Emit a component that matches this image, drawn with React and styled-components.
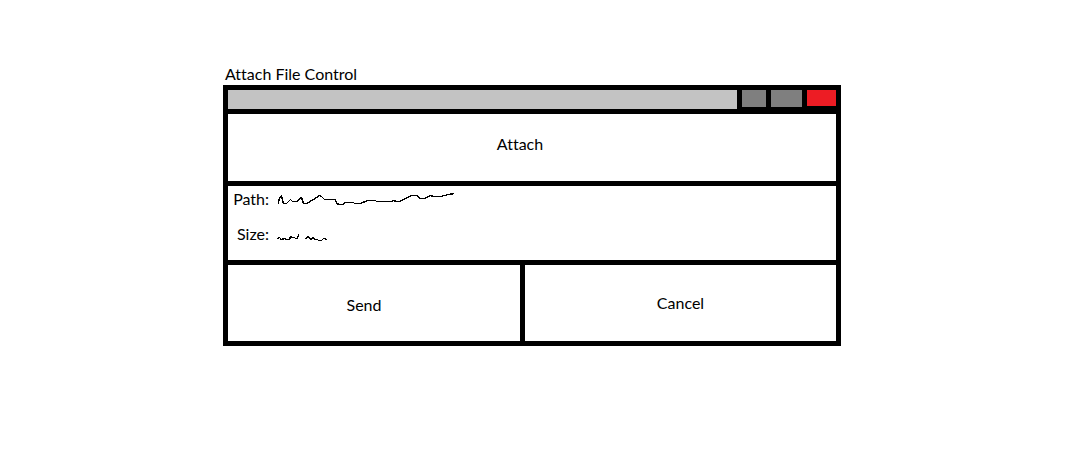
import React from 'react';
import styled, { createGlobalStyle } from 'styled-components';

const GlobalStyle = createGlobalStyle`
  * { box-sizing: border-box; }
  body {
    margin: 0;
    background: #fff;
    color: #000;
    font: 16px/20px Lato, "Open Sans", sans-serif;
    font-variant-ligatures: none;
  }
`;

const Page = styled.main`
  display: grid;
  grid-template-columns: 223fr 618fr 248fr;
  padding: 64px 0;
`;

const Dialog = styled.section`
  grid-column: 2;
  min-width: 0;
`;

const Title = styled.h1`
  margin: 0;
  padding: 0 0 1px 2px;
  font-size: inherit;
  font-weight: inherit;
`;

const Frame = styled.div`
  display: grid;
  gap: 5px;
  padding: 5px;
  background: #000;
`;

const TitleBar = styled.div`
  display: flex;
  gap: 5px;
  height: 19px;
`;

const DragArea = styled.div`
  flex: 1;
  background: #c3c3c3;
`;

const WindowButton = styled.button`
  width: ${({ $width }) => $width}px;
  height: ${({ $height }) => $height}px;
  padding: 0;
  border: 0;
  background: ${({ $color }) => $color};
`;

const ActionButton = styled.button`
  min-height: ${({ $height }) => $height}px;
  padding: ${({ $padding = '0' }) => $padding};
  border: 0;
  border-radius: 0;
  background: #fff;
  color: inherit;
  font: inherit;
  font-variant-ligatures: none;
`;

const Details = styled.dl`
  display: grid;
  grid-template-columns: 37px 1fr;
  grid-auto-rows: 20px;
  row-gap: 15px;
  column-gap: 8px;
  margin: 0;
  min-height: 74px;
  padding: 3px 4px;
  background: #fff;
`;

const Label = styled.dt`
  text-align: right;
`;

const Value = styled.dd`
  display: flex;
  align-items: ${({ $align }) => $align};
  margin: 0;
`;

const Scribble = styled.svg`
  fill: none;
  stroke: #000;
  stroke-width: 1.4;
  shape-rendering: crispEdges;
`;

const Actions = styled.div`
  display: grid;
  grid-template-columns: 292fr 311fr;
  gap: 5px;
`;

export default function App() {
  return (
    <Page>
      <GlobalStyle />
      <Dialog aria-labelledby="dialog-title">
        <Title id="dialog-title">Attach File Control</Title>
        <Frame>
          <TitleBar>
            <DragArea />
            <WindowButton type="button" aria-label="Minimize" $width={24} $height={17} $color="#7f7f7f" />
            <WindowButton type="button" aria-label="Maximize" $width={31} $height={17} $color="#7f7f7f" />
            <WindowButton type="button" aria-label="Close" $width={29} $height={16} $color="#ed1c24" />
          </TitleBar>
          <ActionButton type="button" $height={67} $padding="0 24px 8px 0">Attach</ActionButton>
          <Details>
            <Label>Path:</Label>
            <Value $align="center">
              <Scribble width="178" height="14" viewBox="277 192 178 14" role="img" aria-label="File path">
                <path d="M278.5 203.5V201.5L279.5 198.5L281.5 196.5L283.5 203.5H286.5L290.5 199.5L292.5 201.5H296.5L301.5 197.5L303.5 203.5H306.5L313.5 199.5L319.5 195.5L321.5 196.5L324.5 199.5H335.5L336.5 203.5L339.5 204.5H342.5L345.5 202.5H353.5L354.5 203.5H360.5L367.5 200.5H375.5L376.5 201.5H391.5L393.5 200.5L396.5 201.5H399.5L405.5 198.5L411.5 195.5H417.5L419.5 198.5H424.5L430.5 195.5L433.5 196.5H440.5L448.5 194.5L454.5 193.5" />
              </Scribble>
            </Value>
            <Label>Size:</Label>
            <Value $align="flex-end">
              <Scribble width="52" height="11" viewBox="276 234 52 11" role="img" aria-label="File size">
                <path d="M276.5 239.5L278.5 238.5L280.5 240.5L283.5 239.5L285.5 240.5H288.5L289.5 237.5L291.5 238.5H293.5L294.5 239.5H296.5L297.5 235.5M304.5 240.5L306.5 237.5L308.5 238.5L309.5 240.5L312.5 238.5L313.5 240.5H316.5L317.5 241.5H320.5L322.5 239.5L326.5 240.5" />
              </Scribble>
            </Value>
          </Details>
          <Actions>
            <ActionButton type="button" $height={76} $padding="4px 20px 0 0">Send</ActionButton>
            <ActionButton type="button" $height={76}>Cancel</ActionButton>
          </Actions>
        </Frame>
      </Dialog>
    </Page>
  );
}
